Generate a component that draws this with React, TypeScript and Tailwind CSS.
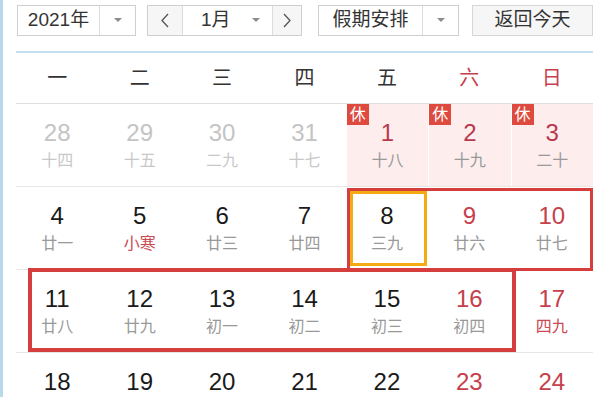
import React from "react";

type Day = { n: string; l: string; kind?: "out" | "red" | "hol"; lred?: boolean };

const rows: Day[][] = [
  [
    { n: "28", l: "十四", kind: "out" },
    { n: "29", l: "十五", kind: "out" },
    { n: "30", l: "二九", kind: "out" },
    { n: "31", l: "十七", kind: "out" },
    { n: "1", l: "十八", kind: "hol" },
    { n: "2", l: "十九", kind: "hol" },
    { n: "3", l: "二十", kind: "hol" },
  ],
  [
    { n: "4", l: "廿一" },
    { n: "5", l: "小寒", lred: true },
    { n: "6", l: "廿三" },
    { n: "7", l: "廿四" },
    { n: "8", l: "三九" },
    { n: "9", l: "廿六", kind: "red" },
    { n: "10", l: "廿七", kind: "red" },
  ],
  [
    { n: "11", l: "廿八" },
    { n: "12", l: "廿九" },
    { n: "13", l: "初一" },
    { n: "14", l: "初二" },
    { n: "15", l: "初三" },
    { n: "16", l: "初四", kind: "red" },
    { n: "17", l: "四九", kind: "red", lred: true },
  ],
  [
    { n: "18", l: "初六" },
    { n: "19", l: "初七" },
    { n: "20", l: "腊八" },
    { n: "21", l: "初九" },
    { n: "22", l: "初十" },
    { n: "23", l: "十一", kind: "red" },
    { n: "24", l: "十二", kind: "red" },
  ],
];

const weekdays = ["一", "二", "三", "四", "五", "六", "日"];

function Caret() {
  return (
    <svg width="8" height="4" viewBox="0 0 8 4">
      <path d="M0 0 L8 0 L4 4 Z" fill="#8c8c8c" />
    </svg>
  );
}

function Chevron({ dir }: { dir: "l" | "r" }) {
  return (
    <svg width="8" height="15" viewBox="0 0 8 15">
      <polyline
        points={dir === "l" ? "7,1 1,7.5 7,14" : "1,1 7,7.5 1,14"}
        fill="none"
        stroke="#555"
        strokeWidth="1.3"
      />
    </svg>
  );
}

function Cell({ d }: { d: Day }) {
  const numColor =
    d.kind === "out" ? "text-[#c4c4c4]" : d.kind === "hol" ? "text-[#b8384e]" : d.kind === "red" ? "text-[#c6404c]" : "text-[#1a1a1a]";
  const lunarColor = d.lred ? "text-[#cc4a52]" : d.kind === "out" ? "text-[#c8c8c8]" : "text-[#999999]";
  return (
    <div
      className={`relative h-[82px] flex flex-col items-center pt-[16px] ${
        d.kind === "hol" ? "bg-[#fdeded] border-l border-white" : ""
      }`}
    >
      {d.kind === "hol" && (
        <span className="absolute left-0 top-0 w-[22px] h-[21px] bg-[#de4a3e] text-white text-[16px] leading-[21px] text-center">
          休
        </span>
      )}
      <span className={`text-[24px] leading-[26px] ${numColor}`}>{d.n}</span>
      <span className={`mt-[5px] text-[16px] leading-[20px] ${lunarColor}`}>{d.l}</span>
    </div>
  );
}

export default function App() {
  return (
    <div
      className="w-[600px] h-[397px] overflow-hidden bg-white flex"
      style={{ fontFamily: '"Liberation Sans", "Noto Sans CJK SC", sans-serif' }}
    >
      <div className="w-[3px] shrink-0 bg-[#b9d8ee]" />
      <div className="pl-[13px] pt-[5px] flex flex-col">
        {/* controls */}
        <div className="flex items-stretch h-[38px] text-[19px] text-[#333]">
          <div className="ml-[1px] w-[119px] flex border border-[#cfcfcf] bg-white">
            <div className="flex-1 flex items-center justify-center">2021年</div>
            <div className="w-[36px] flex items-center justify-center border-l border-[#dcdcdc]">
              <Caret />
            </div>
          </div>
          <div className="ml-[11px] w-[155px] flex border border-[#cfcfcf]">
            <div className="w-[35px] flex items-center justify-center bg-[#f6f6f6] border-r border-[#dcdcdc]">
              <Chevron dir="l" />
            </div>
            <div className="flex-1 flex items-center pl-[18px] pr-[12px] justify-between bg-white">
              <span>1月</span>
              <Caret />
            </div>
            <div className="w-[29px] flex items-center justify-center bg-[#f6f6f6] border-l border-[#dcdcdc]">
              <Chevron dir="r" />
            </div>
          </div>
          <div className="ml-[16px] w-[141px] flex border border-[#cfcfcf] bg-white">
            <div className="flex-1 flex items-center justify-center">假期安排</div>
            <div className="w-[36px] flex items-center justify-center border-l border-[#dcdcdc]">
              <Caret />
            </div>
          </div>
          <div className="ml-[13px] w-[121px] flex items-center justify-center border border-[#d6d6d6] bg-[#f6f6f6]">
            返回今天
          </div>
        </div>

        {/* calendar */}
        <div className="mt-[15px] w-[577px] border-t-2 border-[#c3def0]">
          <div className="grid grid-cols-7 h-[51px] border-b border-[#dedede] text-[20px]">
            {weekdays.map((w, i) => (
              <div
                key={w}
                className={`flex items-center justify-center ${i >= 5 ? "text-[#c6404c]" : "text-[#333]"}`}
              >
                {w}
              </div>
            ))}
          </div>
          <div className="relative">
            {rows.map((r, ri) => (
              <div key={ri} className="grid grid-cols-7 border-b border-[#e6e6e6]">
                {r.map((d) => (
                  <Cell key={d.n} d={d} />
                ))}
              </div>
            ))}
            {/* annotations */}
            <div className="absolute left-[331px] top-[84px] w-[246px] h-[83px] border-[3px] border-[#d63d3d]" />
            <div className="absolute left-[334px] top-[87px] w-[77px] h-[75px] border-[3px] border-[#f4aa12]" />
            <div className="absolute left-[12px] top-[164px] w-[488px] h-[84px] border-[4px] border-[#d63d3d]" />
          </div>
        </div>
      </div>
    </div>
  );
}
